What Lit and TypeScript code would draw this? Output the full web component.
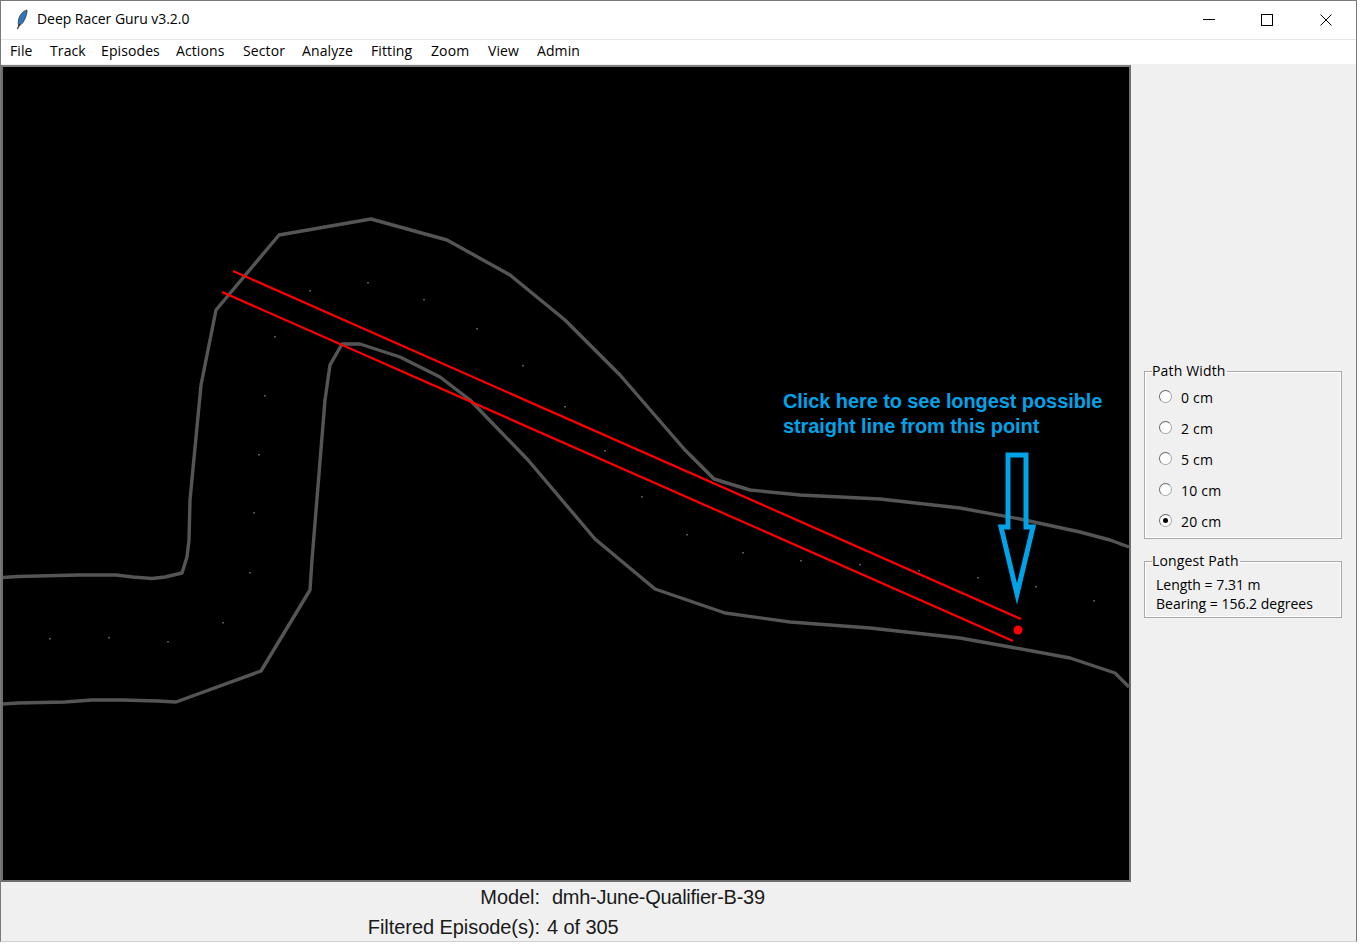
import { LitElement, html, css, svg } from "lit";
import { customElement } from "lit/decorators.js";

const outer = "3,577.5 18,576.5 78,575 116,575 133,577 152,578.5 165,577 182,573 187,557 189,540 190,500 201,385 216,310 279,235 371,219 447,240 510,275 565,320 620,375 685,450 714,479 750,490 800,495 880,499 960,508 1020,519 1080,532 1110,540 1129,547";
const inner = "3,704 18,703 65,702 92,700 122,700 158,701 176,702 261,671 310,590 312,560 325,400 330,365 342,344 360,344 400,357 440,377 470,400 528,460 595,539 655,589 725,613 790,622 870,628 960,638 1010,647 1070,658 1115,673 1129,687";
const dots = [[49,638],[108,637],[167,641],[222,622],[249,572],[253,512],[258,454],[264,395],[274,336],[309,290],[367,282],[423,299],[476,328],[522,365],[564,406],[604,450],[641,496],[686,534],[742,552],[800,560],[859,564],[918,570],[977,577],[1035,586],[1093,600]];
const menus: [string, number][] = [["File",40],["Track",51],["Episodes",75],["Actions",67],["Sector",59],["Analyze",69],["Fitting",60],["Zoom",57],["View",49],["Admin",50]];
const widths = ["0 cm","2 cm","5 cm","10 cm","20 cm"];

@customElement("app-root")
export class AppRoot extends LitElement {
  static styles = css`
    :host { display: block; width: 1360px; height: 944px; background: #fff; overflow: hidden; font-family: "Open Sans", "Noto Sans", sans-serif; color: #000; }
    .window { width: 1357px; height: 942px; box-sizing: border-box; border: 1px solid #7a7a7a; border-bottom-color: #d0d0d0; display: flex; flex-direction: column; background: #f0f0f0; }
    .title { height: 38px; flex: none; display: flex; align-items: center; background: #fff; font-size: 14px; padding-left: 12px; }
    .title .name { margin-left: 6px; margin-bottom: 3px; letter-spacing: -0.05px; }
    .feather { width: 18px; height: 22px; display: block; margin-bottom: 3px; }
    .controls { margin-left: auto; display: flex; padding-right: 1px; }
    .ctl { width: 58.5px; height: 38px; display: flex; align-items: center; justify-content: center; }
    .ctl svg { width: 12px; height: 12px; display: block; }
    .menu { height: 25px; flex: none; background: #fff; border-top: 1px solid #e5e5e5; box-sizing: border-box; display: flex; align-items: center; padding: 0 0 3px 9px; font-size: 14px; letter-spacing: 0.1px; }
    .menu span { display: block; flex: none; }
    .main { display: flex; height: 817px; flex: none; padding-top: 1px; }
    .canvas { width: 1130px; height: 817px; flex: none; box-sizing: border-box; border: 2px solid #6e6e6e; border-top-color: #808080; background: #000; position: relative; }
    .canvas svg { position: absolute; left: -3px; top: -67px; width: 1360px; height: 944px; }
    .note { position: absolute; left: 780px; top: 322px; font: bold 20px/25px "Liberation Sans", Arial, sans-serif; letter-spacing: -0.09px; color: #00a2e8; white-space: nowrap; }
    .side { flex: 1; display: flex; flex-direction: column; padding: 297px 14px 0 13px; gap: 13px; }
    fieldset { margin: 0; padding: 0; border: 1px solid #a9a9a9; box-shadow: inset 0 0 0 1px #fff; position: relative; font-size: 14px; min-width: 0; }
    legend { padding: 0; margin-left: 7px; padding-right: 1px; line-height: 18px; letter-spacing: 0.15px; }
    .radios { display: flex; flex-direction: column; padding: 0 0 1px 14px; margin-top: 2px; letter-spacing: 0.2px; }
    .radio { height: 31px; display: flex; align-items: center; gap: 9px; }
    .dot { width: 13px; height: 13px; box-sizing: border-box; border-radius: 50%; background: #fff; border: 1px solid #a8a8a8; border-top-color: #6a6a6a; border-left-color: #6a6a6a; display: flex; align-items: center; justify-content: center; margin-top: -2px; }
    .dot.on::after { content: ""; width: 5px; height: 5px; border-radius: 50%; background: #000; }
    .info { padding: 0 0 4px 11px; line-height: 19px; margin-top: 5px; }
    .footer { flex: 1; display: grid; grid-template-columns: 539px auto; grid-auto-rows: 30px; font: 20px/30px "Liberation Sans", Arial, sans-serif; color: #1a1a1a; letter-spacing: -0.06px; }
    .footer .k { text-align: right; }
    .footer .v { padding-left: 12px; white-space: nowrap; letter-spacing: -0.27px; }
    .footer .v.b { padding-left: 7px; letter-spacing: -0.1px; }
  `;

  render() {
    return html`<div class="window">
      <div class="title">
        <svg class="feather" viewBox="0 0 18 22">
          <path d="M14 2C10 3 6.5 7 5.5 12C5 14.5 5 16.5 6 18C9 16.5 12 12 13.2 7.5C13.8 5.5 14.2 3.5 14 2Z" fill="#2f74c0" stroke="#333" stroke-width=".8"/>
          <path d="M6.5 16L4.5 21" fill="none" stroke="#333" stroke-width="1.2"/>
        </svg>
        <span class="name">Deep Racer Guru v3.2.0</span>
        <div class="controls">
          <div class="ctl"><svg viewBox="0 0 12 12"><path d="M0 5.5H12" stroke="#000" fill="none"/></svg></div>
          <div class="ctl"><svg viewBox="0 0 12 12"><rect x=".5" y=".5" width="11" height="11" stroke="#000" fill="none"/></svg></div>
          <div class="ctl"><svg viewBox="0 0 12 12"><path d="M.5 .5L11.5 11.5M11.5 .5L.5 11.5" stroke="#000" fill="none" stroke-width="1"/></svg></div>
        </div>
      </div>
      <div class="menu">${menus.map(([m, w]) => html`<span style="width:${w}px">${m}</span>`)}</div>
      <div class="main">
        <div class="canvas">
          <svg viewBox="0 0 1360 944">
            <polyline points=${outer} fill="none" stroke="#555" stroke-width="3.4" stroke-linejoin="round"/>
            <polyline points=${inner} fill="none" stroke="#555" stroke-width="3.4" stroke-linejoin="round"/>
            ${dots.map((d) => svg`<rect x=${d[0]} y=${d[1]} width="2" height="1.5" fill="#5a5a5a"/>`)}
            <line x1="233" y1="271" x2="1021" y2="619" stroke="#f00" stroke-width="2.2"/>
            <line x1="222" y1="292" x2="1013" y2="641" stroke="#f00" stroke-width="2.2"/>
            <circle cx="1018" cy="630" r="4.5" fill="#f00"/>
            <path d="M1008 455H1026V527H1033L1017 594L1001 527H1008Z" fill="none" stroke="#00a2e8" stroke-width="5" stroke-miterlimit="6"/>
          </svg>
          <div class="note">Click here to see longest possible<br/>straight line from this point</div>
        </div>
        <div class="side">
          <fieldset>
            <legend>Path Width</legend>
            <div class="radios">
              ${widths.map((w, i) => html`<div class="radio"><span class="dot ${i === 4 ? "on" : ""}"></span><span>${w}</span></div>`)}
            </div>
          </fieldset>
          <fieldset>
            <legend>Longest Path</legend>
            <div class="info">Length = 7.31 m<br/>Bearing = 156.2 degrees</div>
          </fieldset>
        </div>
      </div>
      <div class="footer">
        <div class="k">Model:</div><div class="v">dmh-June-Qualifier-B-39</div>
        <div class="k">Filtered Episode(s):</div><div class="v b">4 of 305</div>
      </div>
    </div>`;
  }
}
